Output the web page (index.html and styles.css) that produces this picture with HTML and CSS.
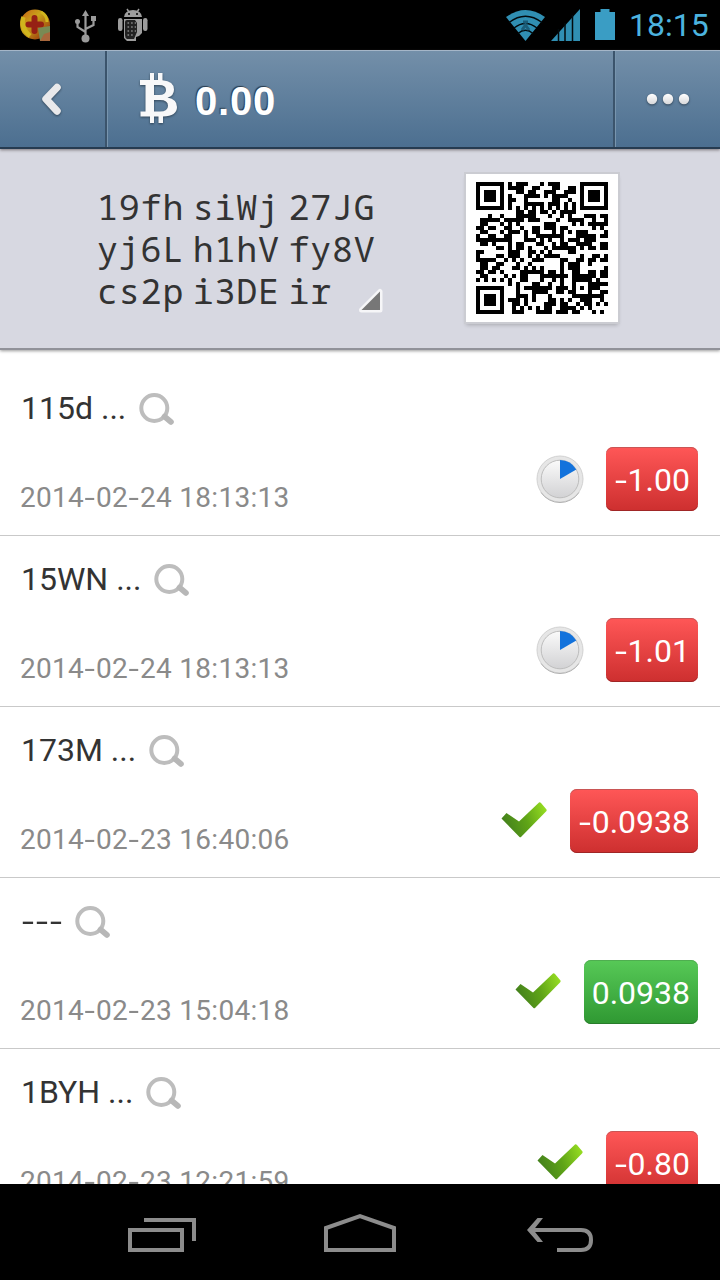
FILE: index.html
```html
<!DOCTYPE html>
<html lang="en">
<head>
<meta charset="utf-8">
<title>Wallet address</title>
<link rel="stylesheet" href="styles.css">
</head>
<body>
<svg class="defs" width="0" height="0" aria-hidden="true">
  <defs>
    <linearGradient id="tickFill" x1="0" y1="0.5" x2="1" y2="0.2">
      <stop offset="0" stop-color="#43801c"/><stop offset="0.5" stop-color="#5fa417"/><stop offset="1" stop-color="#97de22"/>
    </linearGradient>
    <linearGradient id="dialFill" x1="0" y1="0" x2="0" y2="1">
      <stop offset="0" stop-color="#fafafa"/><stop offset="1" stop-color="#d2d2d4"/>
    </linearGradient>
    <linearGradient id="ballFill" x1="0" y1="0" x2="1" y2="1">
      <stop offset="0" stop-color="#c65a16"/><stop offset="0.4" stop-color="#c9a51a"/><stop offset="1" stop-color="#8e1d0a"/>
    </linearGradient>
    <linearGradient id="whiteFill" x1="0" y1="0" x2="0" y2="1">
      <stop offset="0" stop-color="#ffffff"/><stop offset="1" stop-color="#d8d8da"/>
    </linearGradient>
    <symbol id="lens" viewBox="0 0 36 36">
      <circle cx="15.300" cy="18" r="13" fill="none" stroke="#bdbdbd" stroke-width="4"/>
      <path d="M25.500 26.500L32 32" stroke="#b7b7b7" stroke-width="5.600" stroke-linecap="round"/>
    </symbol>
    <symbol id="tick" viewBox="0 0 46 36">
      <path d="M0.500 16.500L5.500 11L18 19.500L38 0.500Q39 0 40 1L45.500 7.500Q46 8.500 45 9.500L20 35Q19.300 35.500 18.500 35Z" fill="url(#tickFill)"/>
    </symbol>
    <symbol id="dial" viewBox="0 0 48 48">
      <circle cx="24" cy="24" r="23" fill="#e6e6e6" stroke="#d2d2d2" stroke-width="1"/>
      <path d="M5 37.500A23 23 0 0 0 43 37.500" fill="none" stroke="#b2b2b2" stroke-width="1"/>
      <circle cx="24" cy="24" r="18.800" fill="url(#dialFill)" stroke="#bdbdbd" stroke-width="1"/>
      <path d="M24 24V5A19 19 0 0 1 40.300 14.600Z" fill="#1272dc"/>
    </symbol>
  </defs>
</svg>

<div class="screen">
  <header class="status">
    <div class="notices">
      <svg width="32" height="34" viewBox="0 0 32 34">
        <circle cx="15" cy="16.500" r="15" fill="url(#ballFill)"/>
        <path d="M3.500 9Q0 19 10 28" fill="none" stroke="#d0b51d" stroke-width="4.500"/>
        <path d="M21 4Q27 7 27 14" fill="none" stroke="#d0b51d" stroke-width="3"/>
        <path d="M14.500 10V23M8.500 16.500H21" stroke="#962014" stroke-width="6" stroke-linecap="round"/>
        <path d="M18 20L30 18V33H20Z" fill="#798a54"/><path d="M24 26L30 24V33H20Z" fill="#a8673c"/>
      </svg>
      <svg class="usb" width="22" height="33" viewBox="0 0 22 33">
        <g fill="none" stroke="#9b9b9b" stroke-width="2.200"><path d="M10.500 3V29M10.500 22L2.500 17V11M10.500 19L18.500 15V8"/></g>
        <g fill="#9b9b9b"><path d="M10.500 0L14 6H7Z"/><circle cx="2.500" cy="11.500" r="2.500"/><path d="M16 6H21V11H16Z"/><circle cx="10.500" cy="28.500" r="4"/></g>
      </svg>
      <svg width="30" height="34" viewBox="0 0 30 34">
        <g fill="#9d9d9d"><path d="M6 9A9 7 0 0 1 24 9Z"/><path d="M9 1L11 4M21 1L19 4" stroke="#9d9d9d" stroke-width="1.500"/><rect x="0" y="10" width="4.500" height="13" rx="2.200"/><rect x="25" y="10" width="4.500" height="13" rx="2.200"/><path d="M6 11H24V25L21 28L18 29V33H9L6 30Z"/></g>
        <path d="M9 12H17L19 15V24L16 31H9Q7 30 7 27V14Q7 12 9 12Z" fill="#222"/>
        <path d="M9.500 15H18M9.500 19H18M9.500 23H18M9.500 27H15" stroke="#858585" stroke-width="1.600" stroke-dasharray="1.600 2"/>
        <circle cx="11" cy="6" r="1" fill="#000"/><circle cx="19" cy="6" r="1" fill="#000"/>
      </svg>
    </div>
    <div class="system">
      <svg class="wifi" width="39" height="31" viewBox="0 0 39 31">
        <path d="M0 7Q19.500 -7 39 7L19.500 31Z" fill="#308fb3"/>
        <g fill="none" stroke="#020a0d" stroke-width="1.500"><path d="M3 12.500Q19.500 0 36 12.500M8 18Q19.500 9 31 18M12 23.500Q19.500 17 27 23.500"/></g>
        <path d="M17 12H22M16 20L19.500 15L23 20" fill="none" stroke="#1b5d78" stroke-width="3"/>
      </svg>
      <svg class="signal" width="29" height="32" viewBox="0 0 29 32">
        <path d="M0 32L29 0V32Z" fill="#308fb3"/><path d="M7.500 20V32M14 14V32M21.500 6V32" stroke="#020a0d" stroke-width="1.500"/>
      </svg>
      <svg class="battery" width="20" height="31" viewBox="0 0 20 31"><path d="M0 3H5.500V0H14.500V3H20V31H0Z" fill="#3a9dc4"/></svg>
      <span class="clock">18:15</span>
    </div>
  </header>

  <nav class="bar">
    <div class="back">
      <svg width="26" height="38" viewBox="0 0 26 38"><path d="M18 6.500L7 18L18 30" fill="none" stroke="#e9e9eb" stroke-width="7.500" stroke-linecap="round" stroke-linejoin="round"/></svg>
    </div>
    <div class="balance">
      <svg width="38" height="51" viewBox="0 0 38 51">
        <path fill="#f8f8f9" fill-rule="evenodd" d="M0 7H10V0H14V7H18V0H22.500V7.200Q34 8 34 16.500Q34 23 27.500 24.500Q37 26 37 34Q37 43 23 43.500V50H18.500V43.500H14V50H10V43.500H0.500V38.500H5.500V12H0ZM14 12V22H19Q26 22 26 17Q26 12 19 12ZM14 27V38.500H20Q28 38.500 28 32.700Q28 27 20 27Z"/>
      </svg>
      <span class="total">0.00</span>
    </div>
    <div class="more">
      <svg width="46" height="14" viewBox="0 0 46 14"><g fill="url(#whiteFill)"><circle cx="7" cy="6" r="5.200"/><circle cx="23" cy="6" r="5.200"/><circle cx="39" cy="6" r="5.200"/></g></svg>
    </div>
  </nav>

  <section class="address">
    <div class="code">
      <div>19fh siWj 27JG</div>
      <div>yj6L h1hV fy8V</div>
      <div>cs2p i3DE ir</div>
      <svg class="corner" width="26" height="28" viewBox="0 0 26 28"><path d="M3.500 24L22 5.500V24Z" fill="#777" stroke="#f6f6f8" stroke-width="5" stroke-linejoin="round" paint-order="stroke"/></svg>
    </div>
    <div class="paper"><svg id="qr" width="132" height="132" viewBox="0 0 33 33" shape-rendering="crispEdges"></svg></div>
  </section>

  <main class="list">
    <article class="tx">
      <div class="info"><div class="peer">115d ...<svg class="lens"><use href="#lens"/></svg></div><div class="date">2014<span class="dash">-</span>02<span class="dash">-</span>24 18:13:13</div></div>
      <div class="result"><svg class="dial"><use href="#dial"/></svg><span class="amount out"><span class="dash">-</span>1.00</span></div>
    </article>
    <article class="tx">
      <div class="info"><div class="peer">15WN ...<svg class="lens"><use href="#lens"/></svg></div><div class="date">2014<span class="dash">-</span>02<span class="dash">-</span>24 18:13:13</div></div>
      <div class="result"><svg class="dial"><use href="#dial"/></svg><span class="amount out"><span class="dash">-</span>1.01</span></div>
    </article>
    <article class="tx">
      <div class="info"><div class="peer">173M ...<svg class="lens"><use href="#lens"/></svg></div><div class="date">2014<span class="dash">-</span>02<span class="dash">-</span>23 16:40:06</div></div>
      <div class="result"><svg class="tick"><use href="#tick"/></svg><span class="amount out"><span class="dash">-</span>0.0938</span></div>
    </article>
    <article class="tx">
      <div class="info"><div class="peer"><span class="dash">-</span><span class="dash">-</span><span class="dash">-</span><svg class="lens"><use href="#lens"/></svg></div><div class="date">2014<span class="dash">-</span>02<span class="dash">-</span>23 15:04:18</div></div>
      <div class="result"><svg class="tick"><use href="#tick"/></svg><span class="amount in">0.0938</span></div>
    </article>
    <article class="tx">
      <div class="info"><div class="peer">1BYH ...<svg class="lens"><use href="#lens"/></svg></div><div class="date">2014<span class="dash">-</span>02<span class="dash">-</span>23 12:21:59</div></div>
      <div class="result"><svg class="tick"><use href="#tick"/></svg><span class="amount out"><span class="dash">-</span>0.80</span></div>
    </article>
  </main>

  <footer class="keys">
    <svg width="70" height="36" viewBox="0 0 70 36"><path d="M2 13H54V33H2ZM16 3H66V24" fill="none" stroke="#8c8c8c" stroke-width="4"/></svg>
    <svg width="74" height="40" viewBox="0 0 74 40"><path d="M3 37V15L37 3L71 15V37Z" fill="none" stroke="#8c8c8c" stroke-width="4"/></svg>
    <svg width="68" height="36" viewBox="0 0 68 36"><path d="M5 13H54Q64 13 64 23Q64 33 54 33H30" fill="none" stroke="#8c8c8c" stroke-width="4"/><path d="M10.500 1H16L6.500 13L16 25H10.500L0 13Z" fill="#8c8c8c"/></svg>
  </footer>
</div>
<script src="qr.js"></script>
</body>
</html>
```
FILE: styles.css
```css
* { box-sizing: border-box; }
body { margin: 0; background: #fff; font-family: Roboto, "Liberation Sans", sans-serif; }
svg { display: block; flex: none; }
.defs { position: absolute; }
.screen { width: 720px; height: 1280px; display: flex; flex-direction: column; overflow: hidden; }

.status { flex: none; height: 50px; background: #000; display: flex; justify-content: space-between; padding: 8px 12px 0 20px; }
.notices { display: flex; align-items: flex-start; }
.usb { margin: 2px 21px 0 23px; }
.system { display: flex; align-items: flex-start; }
.wifi { margin-top: 2px; }
.signal { margin: 1px 15px 0 6px; }
.battery { margin: 1px 14px 0 0; }
.clock { font-size: 32px; line-height: 34px; color: #4cb3df; width: 79px; white-space: nowrap; }

.bar { flex: none; height: 99px; display: flex; background: linear-gradient(#738fa9, #4c6f90); border-top: 1px solid #a5b6c8; border-bottom: 2px solid #263b50; position: relative; z-index: 1; box-shadow: 0 1px 3px rgba(60, 50, 50, .6); }
.back { width: 107px; border-right: 2px solid #3b546c; padding: 30px 0 0 39px; }
.balance { flex: 1; display: flex; border-left: 1px solid #7895ae; padding: 22px 0 0 32px; }
.back svg, .balance svg, .more svg { filter: drop-shadow(0 1px 1px rgba(30, 45, 60, .7)); }
.total { font: bold 40px/46px "Liberation Sans", sans-serif; color: #fff; margin: 5px 0 0 17px; letter-spacing: .8px; text-shadow: -1px -1px 1px rgba(25, 40, 55, .8); }
.more { width: 107px; border-left: 2px solid #3b546c; box-shadow: inset 1px 0 #7895ae; padding: 42px 0 0 30px; }

.address { flex: none; height: 201px; background: #d7d8e1; border-bottom: 2px solid #919299; box-shadow: 0 1px 3px rgba(0, 0, 0, .4); display: flex; padding-left: 97px; }
.code { position: relative; width: 369px; padding-top: 37px; font-family: "Noto Sans Mono", "DejaVu Sans Mono", monospace; font-size: 35px; letter-spacing: .8px; word-spacing: -13.300px; line-height: 42px; color: #333; }
.corner { position: absolute; left: 261px; top: 137px; }
.paper { width: 152px; height: 148px; margin-top: 25px; padding: 8px 10px; background: #fff; box-shadow: 0 0 0 2px #cbccd2, 0 3px 4px rgba(0, 0, 0, .22); }

.list { flex: 1; min-height: 0; overflow: hidden; padding-top: 15px; }
.tx { height: 171px; border-bottom: 1px solid #c9c9c9; display: flex; justify-content: space-between; padding: 25px 22px 24px 21px; }
.info { display: flex; flex-direction: column; justify-content: space-between; }
.peer { display: flex; align-items: center; height: 36px; font-size: 32px; line-height: 36px; color: #333; white-space: pre; }
.lens { width: 36px; height: 36px; margin-left: 13px; }
.date { font-size: 28px; line-height: 32px; letter-spacing: .27px; color: #8a8a8a; margin: 0 0 -3px -1px; }
.dash { display: inline-block; width: .43em; text-align: center; transform: scaleX(1.35); }
.result { display: flex; align-items: flex-end; }
.dial { width: 48px; height: 48px; margin: 0 22px 8px 0; }
.tick { width: 46px; height: 36px; margin: 0 23px 15px 0; }
.amount { height: 64px; border-radius: 7px; padding: 0 8px; font-size: 32px; line-height: 66px; color: #fff; white-space: nowrap; }
.out { background: linear-gradient(#ff5757, #cd2f2f); box-shadow: inset 0 1px #c95555, inset 0 -1px #a02626; }
.in { background: linear-gradient(#57c957, #2f9832); box-shadow: inset 0 1px #4fae50, inset 0 -1px #287c2b; }

.keys { flex: none; height: 96px; background: #000; display: flex; justify-content: space-between; padding: 33px 125px 0 128px; }
.keys svg:nth-child(2) { margin: -4px 6px 0 0; }
```
FILE: qr.js
```js
// Draws the address as a version 4-H QR symbol (33 x 33 modules, mask 7).
(function () {
  var text = Array.from(document.querySelectorAll('.code div')).map(function (d) {
    return d.textContent.replace(/ /g, '');
  }).join('');
  var N = 33, BLOCKS = 4, DATA = 9, EC = 16;

  var exp = [], log = [], v = 1;
  for (var i = 0; i < 255; i++) {
    exp[i] = v; log[v] = i;
    v <<= 1; if (v & 256) v ^= 0x11d;
  }
  function mul(a, b) { return a && b ? exp[(log[a] + log[b]) % 255] : 0; }

  var bits = '0100' + text.length.toString(2).padStart(8, '0');
  for (var c of text) bits += c.charCodeAt(0).toString(2).padStart(8, '0');
  bits += '0000';
  var words = bits.match(/.{8}/g).map(function (b) { return parseInt(b, 2); });

  var gen = [1];
  for (i = 0; i < EC; i++) {
    var next = new Array(gen.length + 1).fill(0);
    gen.forEach(function (g, k) { next[k] ^= g; next[k + 1] ^= mul(g, exp[i]); });
    gen = next;
  }
  var data = [], check = [];
  for (var b = 0; b < BLOCKS; b++) {
    var block = words.slice(b * DATA, (b + 1) * DATA);
    var rem = block.concat(new Array(EC).fill(0));
    for (i = 0; i < DATA; i++) {
      var f = rem[i];
      for (var k = 0; k <= EC; k++) rem[i + k] ^= mul(gen[k], f);
    }
    data.push(block); check.push(rem.slice(DATA));
  }
  var stream = '';
  function interleave(list, count) {
    for (var i = 0; i < count; i++)
      for (var b = 0; b < BLOCKS; b++) stream += list[b][i].toString(2).padStart(8, '0');
  }
  interleave(data, DATA);
  interleave(check, EC);

  var grid = Array.from({ length: N }, function () { return new Array(N).fill(null); });
  function square(r0, c0, rad, outer) {
    for (var dr = -outer; dr <= outer; dr++) for (var dc = -outer; dc <= outer; dc++) {
      var r = r0 + dr, c = c0 + dc, d = Math.max(Math.abs(dr), Math.abs(dc));
      if (r >= 0 && c >= 0 && r < N && c < N) grid[r][c] = d !== rad - 1 && d <= rad ? 1 : 0;
    }
  }
  square(3, 3, 3, 4); square(3, N - 4, 3, 4); square(N - 4, 3, 3, 4);
  square(26, 26, 2, 2);
  for (i = 8; i < N - 8; i++) grid[6][i] = grid[i][6] = i % 2 ? 0 : 1;

  var format = '000100000111011';
  var a = [[8, 0], [8, 1], [8, 2], [8, 3], [8, 4], [8, 5], [8, 7], [8, 8], [7, 8], [5, 8], [4, 8], [3, 8], [2, 8], [1, 8], [0, 8]];
  for (i = 0; i < 15; i++) {
    grid[a[i][0]][a[i][1]] = +format[i];
    if (i < 7) grid[N - 1 - i][8] = +format[i];
    else grid[8][N - 15 + i] = +format[i];
  }
  grid[N - 8][8] = 1;

  var p = 0, up = true;
  for (var col = N - 1; col > 0; col -= 2) {
    if (col === 6) col--;
    for (i = 0; i < N; i++) {
      var row = up ? N - 1 - i : i;
      for (k = 0; k < 2; k++) {
        var x = col - k;
        if (grid[row][x] !== null) continue;
        var bit = p < stream.length ? +stream[p] : 0;
        p++;
        grid[row][x] = bit ^ (((row + x) % 2 + (row * x) % 3) % 2 === 0 ? 1 : 0);
      }
    }
    up = !up;
  }

  var d = '';
  grid.forEach(function (line, r) {
    line.forEach(function (on, c) { if (on) d += 'M' + c + ' ' + r + 'h1v1h-1z'; });
  });
  var path = document.createElementNS('http://www.w3.org/2000/svg', 'path');
  path.setAttribute('d', d);
  document.getElementById('qr').appendChild(path);
})();
```
